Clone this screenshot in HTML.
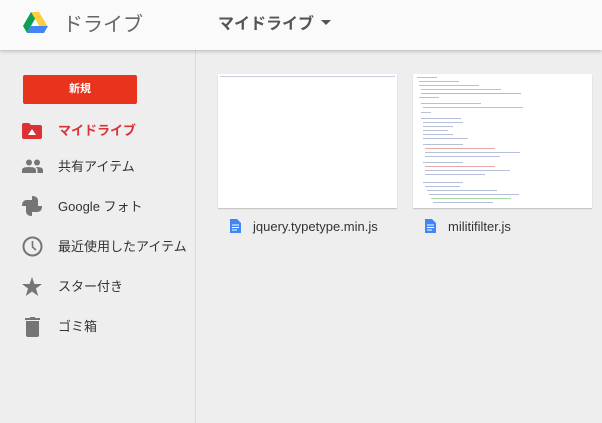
<!DOCTYPE html>
<html><head><meta charset="utf-8"><style>
*{margin:0;padding:0;box-sizing:border-box}
body{width:602px;height:423px;background:#eeeeee;font-family:"Liberation Sans","Noto Sans CJK JP",sans-serif;position:relative;overflow:hidden}
.hdr{position:absolute;left:0;top:0;width:602px;height:50px;background:#fafafa;box-shadow:0 1px 4px rgba(0,0,0,.25);z-index:2}
.side{position:absolute;left:195px;top:50px;width:1px;height:373px;background:#dadada}
.t{position:absolute;white-space:nowrap}
.btn{position:absolute;left:23px;top:75px;width:114px;height:29px;background:#e8341c;border-radius:2px;color:#fff;font-size:11px;font-weight:bold;text-align:center;line-height:29px}
.nav{position:absolute;left:58px;font-size:13px;color:#333}
.ic{position:absolute;left:22px}
.card{position:absolute;top:74px;width:179px;height:134px;background:#fff;box-shadow:0 1px 1px rgba(0,0,0,.2)}
.ln{position:absolute;height:1px;background:#b8bfd8}
.fn{position:absolute;top:219px;font-size:13px;color:#333}
</style></head><body>
<div class="hdr">
<svg style="position:absolute;left:23px;top:12px" width="25" height="22" viewBox="0 0 25 22">
<polygon points="8,0 16,0 8.5,13 4,21 0,14" fill="#0f9d58"/>
<polygon points="8,0 16,0 25,15 17,15" fill="#ffcd40"/>
<polygon points="4,21 8,14 25,14 21,21" fill="#4285f4"/>
</svg>
<div class="t" style="left:63px;top:8px;font-size:20px;color:#666">ドライブ</div>
<div class="t" style="left:218px;top:10px;font-size:16px;font-weight:bold;color:#555">マイドライブ</div>
<svg style="position:absolute;left:321px;top:20px" width="10" height="6"><polygon points="0,0 10,0 5,5" fill="#555"/></svg>
</div>
<div class="side"></div>
<div class="btn">新規</div>
<svg class="ic" style="top:123px" width="20" height="16" viewBox="0 0 20 16"><path d="M0 2Q0 0 2 0H7L9 2H18Q20 2 20 4V14Q20 16 18 16H2Q0 16 0 14Z" fill="#db3236"/><polygon points="10,6 14,12 6,12" fill="#fff"/></svg>
<div class="nav" style="top:120px;color:#db3236;font-weight:bold">マイドライブ</div>
<svg class="ic" style="top:159px" width="21" height="14" viewBox="0 0 21 14"><circle cx="7" cy="3.5" r="3" fill="#757575"/><circle cx="15" cy="3.5" r="3" fill="#757575"/><path d="M0 14V11Q0 8 7 8Q14 8 14 11V14Z M15 8Q21 8 21 11V14H15.5V11Q15.5 9 13.5 8.3Z" fill="#757575"/></svg>
<div class="nav" style="top:156px">共有アイテム</div>
<svg class="ic" style="top:196px" width="20" height="20" viewBox="0 0 20 20"><path d="M10 0V10H0Q0 4 5 4H10Z M10 10H20Q20 16 15 16H10Z M10 10V0Q16 0 16 5V10Z M10 10V20Q4 20 4 15V10Z" fill="#757575"/></svg>
<div class="nav" style="top:196px">Google フォト</div>
<svg class="ic" style="top:236px" width="21" height="21" viewBox="0 0 21 21"><circle cx="10.5" cy="10.5" r="9" fill="none" stroke="#757575" stroke-width="2"/><path d="M10.5 5V11L14 14" fill="none" stroke="#757575" stroke-width="1.6"/></svg>
<div class="nav" style="top:236px">最近使用したアイテム</div>
<svg class="ic" style="top:277px" width="20" height="19" viewBox="0 0 20 19"><polygon points="10,0 12.4,7 20,7 14,11.5 16.2,19 10,14.5 3.8,19 6,11.5 0,7 7.6,7" fill="#757575"/></svg>
<div class="nav" style="top:276px">スター付き</div>
<svg class="ic" style="top:317px;left:25px" width="15" height="20" viewBox="0 0 15 20"><rect x="0" y="1" width="15" height="2" fill="#757575"/><rect x="5" y="0" width="5" height="2" fill="#757575"/><path d="M1 4H14V18Q14 20 12 20H3Q1 20 1 18Z" fill="#757575"/></svg>
<div class="nav" style="top:316px">ゴミ箱</div>

<div class="card" style="left:218px"><div class="ln" style="left:2px;top:2px;width:175px;background:#c8cde0"></div></div>
<div class="card" style="left:413px">
<div class="ln" style="left:4px;top:3px;width:20px"></div>
<div class="ln" style="left:6px;top:7px;width:40px"></div>
<div class="ln" style="left:6px;top:11px;width:60px"></div>
<div class="ln" style="left:8px;top:15px;width:80px;background:#a8d8a8"></div>
<div class="ln" style="left:8px;top:19px;width:100px;background:#e8a8a8"></div>
<div class="ln" style="left:6px;top:23px;width:20px"></div>
<div class="ln" style="left:8px;top:29px;width:60px"></div>
<div class="ln" style="left:10px;top:33px;width:100px"></div>
<div class="ln" style="left:8px;top:38px;width:10px"></div>
<div class="ln" style="left:8px;top:44px;width:40px"></div>
<div class="ln" style="left:10px;top:48px;width:40px"></div>
<div class="ln" style="left:10px;top:52px;width:30px"></div>
<div class="ln" style="left:10px;top:56px;width:25px"></div>
<div class="ln" style="left:10px;top:60px;width:30px"></div>
<div class="ln" style="left:10px;top:64px;width:45px"></div>
<div class="ln" style="left:10px;top:70px;width:40px"></div>
<div class="ln" style="left:12px;top:74px;width:70px;background:#e8a8a8"></div>
<div class="ln" style="left:12px;top:78px;width:95px"></div>
<div class="ln" style="left:12px;top:82px;width:75px"></div>
<div class="ln" style="left:10px;top:88px;width:40px"></div>
<div class="ln" style="left:12px;top:92px;width:70px;background:#e8a8a8"></div>
<div class="ln" style="left:12px;top:96px;width:85px"></div>
<div class="ln" style="left:12px;top:100px;width:60px"></div>
<div class="ln" style="left:10px;top:108px;width:40px"></div>
<div class="ln" style="left:12px;top:112px;width:35px"></div>
<div class="ln" style="left:14px;top:116px;width:70px"></div>
<div class="ln" style="left:16px;top:120px;width:90px"></div>
<div class="ln" style="left:18px;top:124px;width:80px;background:#a8d8a8"></div>
<div class="ln" style="left:20px;top:128px;width:60px"></div>
</div>
<svg style="position:absolute;left:230px;top:219px" width="11" height="14" viewBox="0 0 11 14"><path d="M0 0H7L11 4V14H0Z" fill="#4285f4"/><path d="M2 6H9M2 8.5H9M2 11H7" stroke="#fff" stroke-width="1"/></svg>
<div class="fn" style="left:253px">jquery.typetype.min.js</div>
<svg style="position:absolute;left:425px;top:219px" width="11" height="14" viewBox="0 0 11 14"><path d="M0 0H7L11 4V14H0Z" fill="#4285f4"/><path d="M2 6H9M2 8.5H9M2 11H7" stroke="#fff" stroke-width="1"/></svg>
<div class="fn" style="left:448px">militifilter.js</div>
</body></html>
